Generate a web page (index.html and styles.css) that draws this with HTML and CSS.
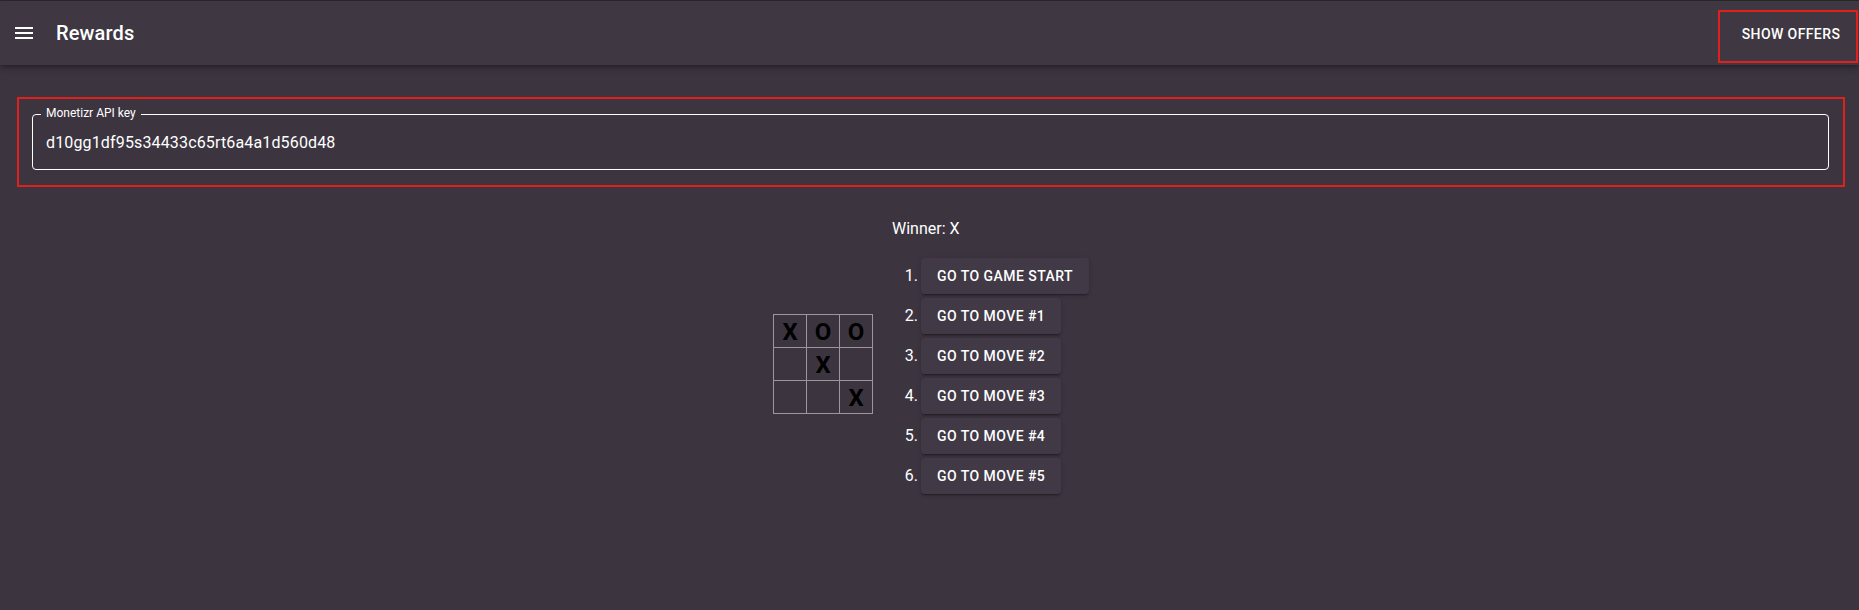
FILE: index.html
```html
<!DOCTYPE html>
<html>
<head>
<meta charset="utf-8">
<link rel="stylesheet" href="styles.css">
</head>
<body>
<div class="topline"></div>
<header class="appbar">
  <div class="menu-btn">
    <svg viewBox="0 0 24 24" width="24" height="24"><path fill="#fff" d="M3 18h18v-2H3v2zm0-5h18v-2H3v2zm0-7v2h18V6H3z"/></svg>
  </div>
  <div class="title">Rewards</div>
  <div class="spacer"></div>
  <div class="offers">Show offers</div>
</header>
<main>
  <section class="key-box">
    <div class="field">
      <span class="label">Monetizr API key</span>
      <div class="value">d10gg1df95s34433c65rt6a4a1d560d48</div>
    </div>
  </section>
  <div class="game">
    <div class="board">
      <div class="row"><div class="sq">X</div><div class="sq">O</div><div class="sq">O</div></div>
      <div class="row"><div class="sq"></div><div class="sq">X</div><div class="sq"></div></div>
      <div class="row"><div class="sq"></div><div class="sq"></div><div class="sq">X</div></div>
    </div>
    <div class="info">
      <div class="status">Winner: X</div>
      <ol class="moves">
        <li><span class="btn">Go to game start</span></li>
        <li><span class="btn">Go to move #1</span></li>
        <li><span class="btn">Go to move #2</span></li>
        <li><span class="btn">Go to move #3</span></li>
        <li><span class="btn">Go to move #4</span></li>
        <li><span class="btn">Go to move #5</span></li>
      </ol>
    </div>
  </div>
</main>
</body>
</html>
```

FILE: styles.css
```css
html, body {
  margin: 0;
  padding: 0;
}
body {
  background: #3c3540;
  color: #fff;
  font-family: Roboto, "Liberation Sans", sans-serif;
  height: 610px;
  overflow: hidden;
}
.topline {
  height: 1px;
  background: #2a2a2a;
}
.appbar {
  height: 64px;
  background: #3f3843;
  display: flex;
  align-items: center;
  box-shadow: 0 2px 4px -1px rgba(0,0,0,0.2), 0 4px 5px 0 rgba(0,0,0,0.14), 0 1px 10px 0 rgba(0,0,0,0.12);
  position: relative;
}
.menu-btn {
  margin-left: 12px;
  width: 24px;
  height: 24px;
  display: flex;
}
.title {
  margin-left: 20px;
  font-size: 20px;
  font-weight: 500;
  letter-spacing: 0.15px;
}
.spacer { flex: 1; }
.offers {
  box-sizing: border-box;
  align-self: flex-start;
  width: 140px;
  height: 53px;
  margin-right: 1px;
  margin-top: 9px;
  border: 2px solid #e0201a;
  padding: 12px 0 0 6px;
  text-align: center;
  line-height: 20px;
  font-size: 14px;
  font-weight: 500;
  letter-spacing: 0.4px;
  text-transform: uppercase;
}
main {
  padding-top: 32px;
}
.key-box {
  margin: 0 14px 0 17px;
  border: 2px solid #e0201a;
  padding: 15px 14px 15px 13px;
}
.field {
  position: relative;
  border: 1px solid #fff;
  border-radius: 4px;
  padding: 2px 13px 0;
  height: 56px;
  box-sizing: border-box;
  display: flex;
  align-items: center;
}
.label {
  position: absolute;
  top: -10px;
  left: 8px;
  font-size: 12px;
  line-height: 16px;
  padding: 0 5px;
  background: #3c3540;
  color: #fff;
}
.value {
  font-size: 16px;
  line-height: 24px;
  letter-spacing: 0.15px;
}
.game {
  display: flex;
  justify-content: center;
  align-items: center;
  margin-top: 30px;
  padding-left: 3px;
}
.board {
  display: flex;
  flex-direction: column;
  padding-top: 1px;
}
.row {
  display: flex;
}
.sq {
  width: 34px;
  height: 34px;
  border: 1px solid #999;
  margin-right: -1px;
  margin-top: -1px;
  color: #000;
  font-size: 24px;
  font-weight: bold;
  line-height: 34px;
  text-align: center;
  padding: 0;
  box-sizing: border-box;
}
.info {
  margin-left: 20px;
}
.status {
  font-size: 16px;
  line-height: 24px;
}
.moves {
  margin: 17px 0 16px;
  padding-left: 30px;
  font-size: 16px;
  line-height: 24px;
}
.moves li {
  height: 36px;
  margin-bottom: 4px;
}
.moves li:last-child { margin-bottom: 0; }
.btn {
  display: inline-block;
  box-sizing: border-box;
  height: 36px;
  padding: 6px 16px;
  margin-left: -1px;
  line-height: 24px;
  font-size: 14px;
  font-weight: 500;
  letter-spacing: 0.45px;
  text-transform: uppercase;
  background: #413946;
  border-radius: 4px;
  box-shadow: 0 3px 1px -2px rgba(0,0,0,0.2), 0 2px 2px 0 rgba(0,0,0,0.14), 0 1px 5px 0 rgba(0,0,0,0.12);
}
```
